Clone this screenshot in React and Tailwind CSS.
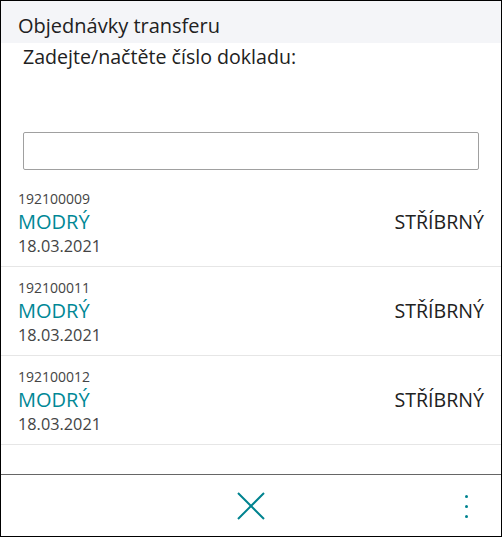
import React from "react";

const items = [
  { no: "192100009", from: "MODRÝ", date: "18.03.2021", to: "STŘÍBRNÝ" },
  { no: "192100011", from: "MODRÝ", date: "18.03.2021", to: "STŘÍBRNÝ" },
  { no: "192100012", from: "MODRÝ", date: "18.03.2021", to: "STŘÍBRNÝ" },
];

const App = () => {
  return (
    <div
      className="w-[502px] h-[537px] border border-black bg-white flex flex-col text-[#212121] overflow-hidden"
      style={{ fontFamily: '"Open Sans", "Noto Sans", sans-serif' }}
    >
      {/* Header */}
      <div className="h-[42px] bg-[#f4f5f8] flex items-center pl-[17px] pt-[8px] text-[20px] leading-none">
        Objednávky transferu
      </div>

      <div className="pl-[22px] pt-[2px] text-[19.6px] leading-[24px]">
        Zadejte/načtěte číslo dokladu:
      </div>

      {/* Input */}
      <div className="px-[22px] pt-[63px] pb-[8px]">
        <input
          type="text"
          className="w-full h-[38px] border border-[#a0a0a0] rounded-[2px] outline-none px-2"
        />
      </div>

      {/* List */}
      <div className="flex-1">
        {items.map((item) => (
          <div
            key={item.no}
            className="h-[89px] border-b border-[#e6e6e6] flex items-center justify-between pl-[17px] pr-[17px]"
          >
            <div className="flex flex-col pt-[2px]">
              <span className="text-[14px] leading-[19px] text-[#444]">{item.no}</span>
              <span className="text-[20px] leading-[27px] text-[#008896]">{item.from}</span>
              <span className="text-[16.3px] leading-[22px] text-[#444]">{item.date}</span>
            </div>
            <span className="text-[19.6px] leading-[26px] text-[#212121]">{item.to}</span>
          </div>
        ))}
      </div>

      {/* Bottom bar */}
      <div className="h-[62px] border-t border-[#666] relative flex items-center justify-center">
        <svg width="28" height="28" viewBox="0 0 28 28" className="text-[#00838f]">
          <path d="M1 1 L27 27 M27 1 L1 27" stroke="currentColor" strokeWidth="2" fill="none" />
        </svg>
        <div className="absolute right-[33px] top-[20px] flex flex-col gap-[7px]">
          <span className="w-[3px] h-[3px] rounded-full bg-[#00838f]" />
          <span className="w-[3px] h-[3px] rounded-full bg-[#00838f]" />
          <span className="w-[3px] h-[3px] rounded-full bg-[#00838f]" />
        </div>
      </div>
    </div>
  );
};

export default App;
